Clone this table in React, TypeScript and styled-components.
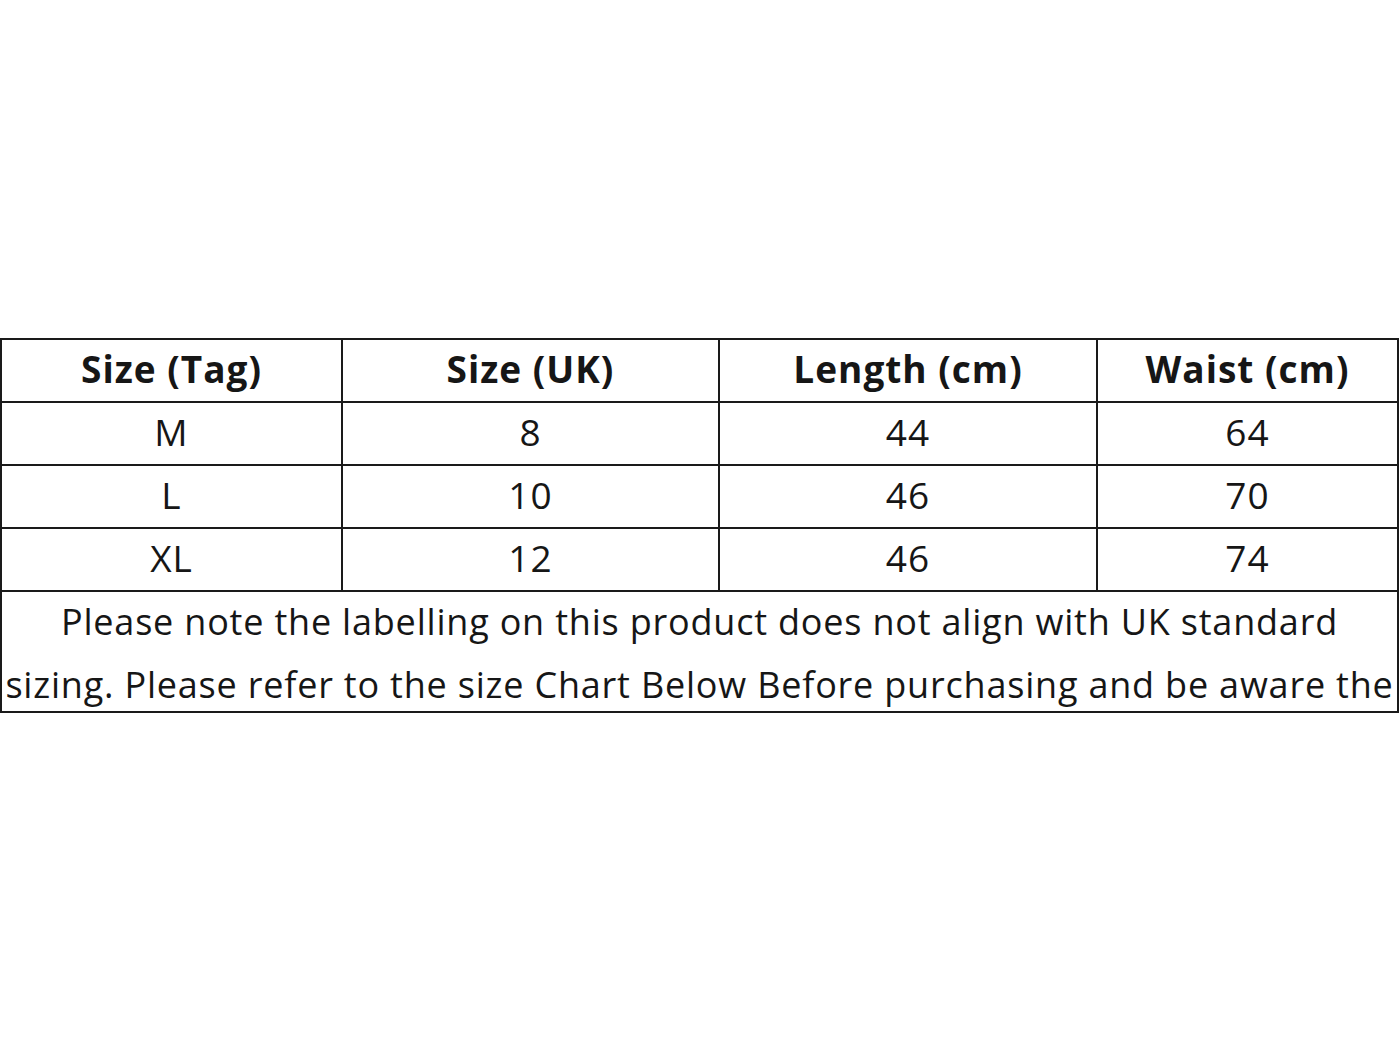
import styled, { createGlobalStyle } from "styled-components";

const GlobalStyle = createGlobalStyle`
  html, body {
    margin: 0;
    padding: 0;
    background: #ffffff;
  }
  body {
    font-family: "Open Sans", "Noto Sans", "Liberation Sans", sans-serif;
    color: #111;
  }
`;

const Page = styled.div`
  display: flex;
  align-items: center;
  width: 1400px;
  height: 1050px;
  box-sizing: border-box;
  padding: 0 1px 0 0;
`;

const Chart = styled.table`
  width: 1399px;
  border-collapse: collapse;
  table-layout: fixed;
  border: 2.5px solid #1a1a1a;
`;

const Cell = styled.td<{ $head?: boolean }>`
  border: 2px solid #1a1a1a;
  height: 58px;
  padding: 0 0 3px;
  text-align: center;
  vertical-align: middle;
  font-size: 37px;
  font-weight: ${(p) => (p.$head ? 700 : 400)};
  letter-spacing: 1px;
  color: #161616;
  white-space: nowrap;
`;

const NoteCell = styled.td`
  padding: 0;
  height: 119px;
  vertical-align: top;
`;

const Note = styled.div`
  height: 117px;
  margin-top: -2px;
  padding-top: 2px;
  overflow: hidden;
  text-align: center;
  font-size: 36px;
  line-height: 63px;
  color: #161616;
  letter-spacing: 0.8px;
  white-space: nowrap;
`;

const NoteLines = styled.div`
  margin-top: -2px;
`;

const heads = ["Size (Tag)", "Size (UK)", "Length (cm)", "Waist (cm)"];

const rows = [
  ["M", "8", "44", "64"],
  ["L", "10", "46", "70"],
  ["XL", "12", "46", "74"],
];

export default function App() {
  return (
    <>
      <GlobalStyle />
      <Page>
        <Chart>
          <colgroup>
            <col style={{ width: 341 }} />
            <col style={{ width: 377 }} />
            <col style={{ width: 378 }} />
            <col />
          </colgroup>
          <tbody>
            <tr>
              {heads.map((h) => (
                <Cell key={h} as="th" $head>
                  {h}
                </Cell>
              ))}
            </tr>
            {rows.map((r) => (
              <tr key={r[0]}>
                {r.map((v, i) => (
                  <Cell key={i}>{v}</Cell>
                ))}
              </tr>
            ))}
            <tr>
              <NoteCell colSpan={4}>
                <Note>
                  <NoteLines>
                    Please note the labelling on this product does not align with UK standard
                    <br />
                    sizing. Please refer to the size Chart Below Before purchasing and be aware the
                  </NoteLines>
                </Note>
              </NoteCell>
            </tr>
          </tbody>
        </Chart>
      </Page>
    </>
  );
}
